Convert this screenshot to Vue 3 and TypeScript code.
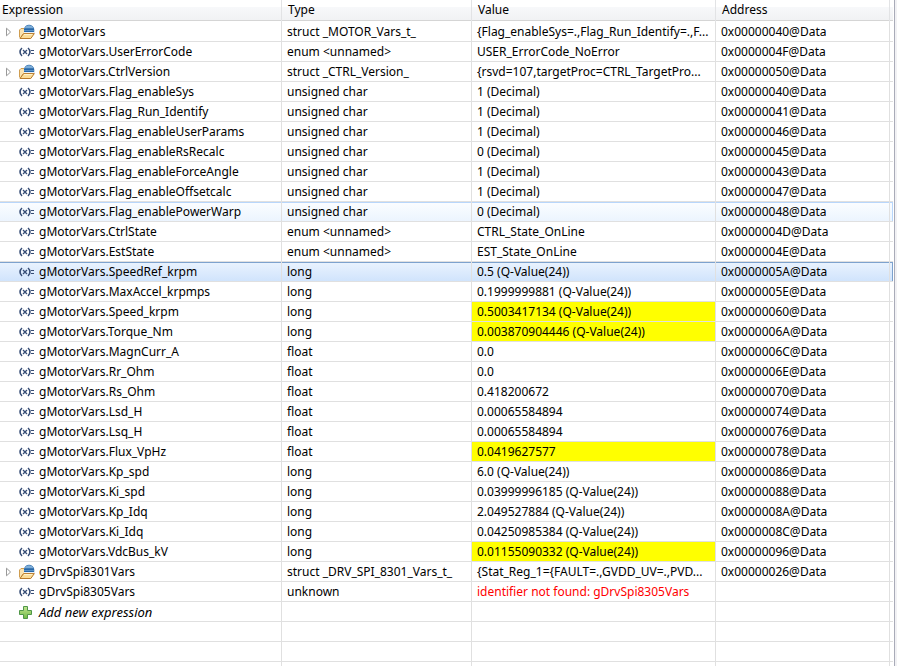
<script setup lang="ts">
import { ref } from 'vue'

type Kind = 'struct' | 'variable'
interface Expression {
  name: string
  type: string
  value: string
  address: string
  kind: Kind
  changed?: boolean
  error?: boolean
}

const root = 'gMotorVars'

function variable(name: string, type: string, value: string, address: string, changed = false): Expression {
  return { name: `${root}.${name}`, type, value, address: `0x000000${address}@Data`, kind: 'variable', changed }
}

const rows: Expression[] = [
  { name: root, type: 'struct _MOTOR_Vars_t_', value: '{Flag_enableSys=.,Flag_Run_Identify=.,F...', address: '0x00000040@Data', kind: 'struct' },
  variable('UserErrorCode', 'enum <unnamed>', 'USER_ErrorCode_NoError', '4F'),
  { name: `${root}.CtrlVersion`, type: 'struct _CTRL_Version_', value: '{rsvd=107,targetProc=CTRL_TargetPro...', address: '0x00000050@Data', kind: 'struct' },
  variable('Flag_enableSys', 'unsigned char', '1 (Decimal)', '40'),
  variable('Flag_Run_Identify', 'unsigned char', '1 (Decimal)', '41'),
  variable('Flag_enableUserParams', 'unsigned char', '1 (Decimal)', '46'),
  variable('Flag_enableRsRecalc', 'unsigned char', '0 (Decimal)', '45'),
  variable('Flag_enableForceAngle', 'unsigned char', '1 (Decimal)', '43'),
  variable('Flag_enableOffsetcalc', 'unsigned char', '1 (Decimal)', '47'),
  variable('Flag_enablePowerWarp', 'unsigned char', '0 (Decimal)', '48'),
  variable('CtrlState', 'enum <unnamed>', 'CTRL_State_OnLine', '4D'),
  variable('EstState', 'enum <unnamed>', 'EST_State_OnLine', '4E'),
  variable('SpeedRef_krpm', 'long', '0.5 (Q-Value(24))', '5A'),
  variable('MaxAccel_krpmps', 'long', '0.1999999881 (Q-Value(24))', '5E'),
  variable('Speed_krpm', 'long', '0.5003417134 (Q-Value(24))', '60', true),
  variable('Torque_Nm', 'long', '0.003870904446 (Q-Value(24))', '6A', true),
  variable('MagnCurr_A', 'float', '0.0', '6C'),
  variable('Rr_Ohm', 'float', '0.0', '6E'),
  variable('Rs_Ohm', 'float', '0.418200672', '70'),
  variable('Lsd_H', 'float', '0.00065584894', '74'),
  variable('Lsq_H', 'float', '0.00065584894', '76'),
  variable('Flux_VpHz', 'float', '0.0419627577', '78', true),
  variable('Kp_spd', 'long', '6.0 (Q-Value(24))', '86'),
  variable('Ki_spd', 'long', '0.03999996185 (Q-Value(24))', '88'),
  variable('Kp_Idq', 'long', '2.049527884 (Q-Value(24))', '8A'),
  variable('Ki_Idq', 'long', '0.04250985384 (Q-Value(24))', '8C'),
  variable('VdcBus_kV', 'long', '0.01155090332 (Q-Value(24))', '96', true),
  { name: 'gDrvSpi8301Vars', type: 'struct _DRV_SPI_8301_Vars_t_', value: '{Stat_Reg_1={FAULT=.,GVDD_UV=.,PVD...', address: '0x00000026@Data', kind: 'struct' },
  { name: 'gDrvSpi8305Vars', type: 'unknown', value: 'identifier not found: gDrvSpi8305Vars', address: '', kind: 'variable', error: true },
]

const selected = ref(`${root}.SpeedRef_krpm`)
const hovered = ref(`${root}.Flag_enablePowerWarp`)
const emptyRows = 3
</script>

<template>
  <main class="view">
    <table class="grid">
      <colgroup>
        <col class="col-expression" />
        <col class="col-type" />
        <col class="col-value" />
        <col class="col-address" />
        <col />
      </colgroup>
      <thead>
        <tr>
          <th scope="col">Expression</th>
          <th scope="col">Type</th>
          <th scope="col">Value</th>
          <th scope="col">Address</th>
          <td></td>
        </tr>
      </thead>
      <tbody>
        <tr
          v-for="row in rows"
          :key="row.name"
          :class="{ selected: row.name === selected, hovered: row.name === hovered }"
          @click="selected = row.name"
          @mouseenter="hovered = row.name"
        >
          <td>
            <div class="name">
              <button v-if="row.kind === 'struct'" class="twisty" type="button" :aria-label="`Expand ${row.name}`">
                <svg width="7" height="10" viewBox="0 0 7 10">
                  <path d="M1.5 1.2 L5.6 5 L1.5 8.8 Z" fill="#fff" stroke="#999" />
                </svg>
              </button>
              <span v-else class="twisty"></span>
              <svg v-if="row.kind === 'struct'" class="icon" viewBox="0 0 16 16" aria-hidden="true">
                <path d="M0.5 13 V6 L2 4.5 H5 L6 6 H12 V10 H4 L1.5 14 Z" fill="#f9e3b0" stroke="#cf9d50" />
                <path d="M5 9 V5 C5.6 2.4 7.4 0.8 10 0.8 S14.6 2.4 15.2 5 V9 Z" fill="#2868a8" />
                <path d="M5.7 4.2 C6.4 2.4 8 1.3 10 1.3 S13.8 2.4 14.5 4.2 Z" fill="#7faed8" />
                <path d="M5 6.5 H15.2" stroke="#5b92c6" />
                <path d="M5 8.6 H15.4" stroke="#fff" />
                <path d="M1 14.5 L4.6 9.6 H15.3 L11.8 14.5 Z" fill="#fbdc96" stroke="#b87a2a" />
                <path d="M5 10.6 H13.4" stroke="#fff3cf" />
              </svg>
              <svg v-else class="icon" viewBox="0 0 16 16" aria-hidden="true">
                <g fill="none" stroke="#354c75">
                  <path d="M3 4 C0.4 6.3 0.4 9.7 3 12 M9 4 C11.6 6.3 11.6 9.7 9 12" stroke-width="1.6" />
                  <path d="M4 6 L8 10 M8 6 L4 10" stroke-width="1.3" />
                  <path d="M12 6.5 H15 M12 9.5 H15" />
                </g>
              </svg>
              <span>{{ row.name }}</span>
            </div>
          </td>
          <td>{{ row.type }}</td>
          <td :class="{ changed: row.changed, error: row.error }">{{ row.value }}</td>
          <td>{{ row.address }}</td>
          <td></td>
        </tr>
        <tr>
          <td>
            <button class="name add" type="button">
              <span class="twisty"></span>
              <svg class="icon" viewBox="0 0 16 16" aria-hidden="true">
                <defs>
                  <linearGradient id="plus-fill" x1="0" y1="0" x2="0" y2="1">
                    <stop offset="0" stop-color="#c3e692" />
                    <stop offset="1" stop-color="#70b944" />
                  </linearGradient>
                </defs>
                <path d="M4.5 2.5 H8.5 V6.5 H12.5 V10.5 H8.5 V14.5 H4.5 V10.5 H0.5 V6.5 H4.5 Z" fill="url(#plus-fill)" stroke="#4f9648" />
              </svg>
              <span>Add new expression</span>
            </button>
          </td>
          <td v-for="n in 4" :key="n"></td>
        </tr>
        <tr v-for="r in emptyRows" :key="`empty-${r}`">
          <td v-for="n in 5" :key="n"></td>
        </tr>
      </tbody>
    </table>
  </main>
</template>

<style>
body {
  margin: 0;
}
</style>

<style scoped>
.view {
  box-sizing: border-box;
  height: 100vh;
  overflow: hidden;
  padding-right: 4px;
  background: linear-gradient(to left, #f1f1f4 2px, #a9abb8 2px, #a9abb8 3px, #fff 3px);
  color: #000;
  font: 12px/16px "Noto Sans", "Open Sans", sans-serif;
}

.grid {
  width: 100%;
  table-layout: fixed;
  border-collapse: separate;
  border-spacing: 0;
}

.col-expression { width: 282px; }
.col-type { width: 190px; }
.col-value { width: 244px; }
.col-address { width: 174px; }

thead tr {
  height: 22px;
  background: linear-gradient(#fff 7px, #f7f8fa 7px, #f1f2f4 20px, #d5d5d5 20px, #d5d5d5 21px, #fff 21px);
}

th {
  padding: 0 6px 2px;
  border-right: 1px solid #e2e3e5;
  font-weight: 400;
  text-align: left;
}

th:first-child {
  padding-left: 2px;
}

thead td {
  padding: 0;
}

tbody tr {
  height: 20px;
}

tbody td {
  box-sizing: border-box;
  height: 20px;
  padding: 0 0 0 5px;
  overflow: hidden;
  border-right: 1px solid #e0e0e0;
  border-bottom: 1px solid #e0e0e0;
  white-space: nowrap;
}

tbody td:first-child,
tbody td:last-child {
  padding: 0;
}

tbody td:last-child {
  border-right: 0;
}

.hovered {
  background: linear-gradient(#fbfdff, #ebf4fe);
}

.hovered td {
  box-shadow: inset 0 1px #b8d6fb;
}

.hovered td:last-child {
  box-shadow: inset -1px 1px #b8d6fb;
}

.selected {
  background: linear-gradient(#eaf3fe, #cfe3fc);
}

.selected td {
  box-shadow: inset 0 1px #7da2ce;
}

.selected td:last-child {
  box-shadow: inset -1px 1px #7da2ce;
}

.changed {
  background: #ff0;
}

.error {
  color: #f00;
}

.name {
  display: flex;
  align-items: center;
  height: 19px;
}

.twisty {
  display: flex;
  flex: none;
  align-items: center;
  width: 19px;
  height: 16px;
  padding: 0 0 0 5px;
  box-sizing: border-box;
  border: 0;
  background: none;
}

.icon {
  flex: none;
  width: 16px;
  height: 16px;
  margin-right: 4px;
}

.add {
  padding: 0;
  border: 0;
  background: none;
  color: inherit;
  font: inherit;
  font-size: 13px;
  font-style: italic;
}
</style>
